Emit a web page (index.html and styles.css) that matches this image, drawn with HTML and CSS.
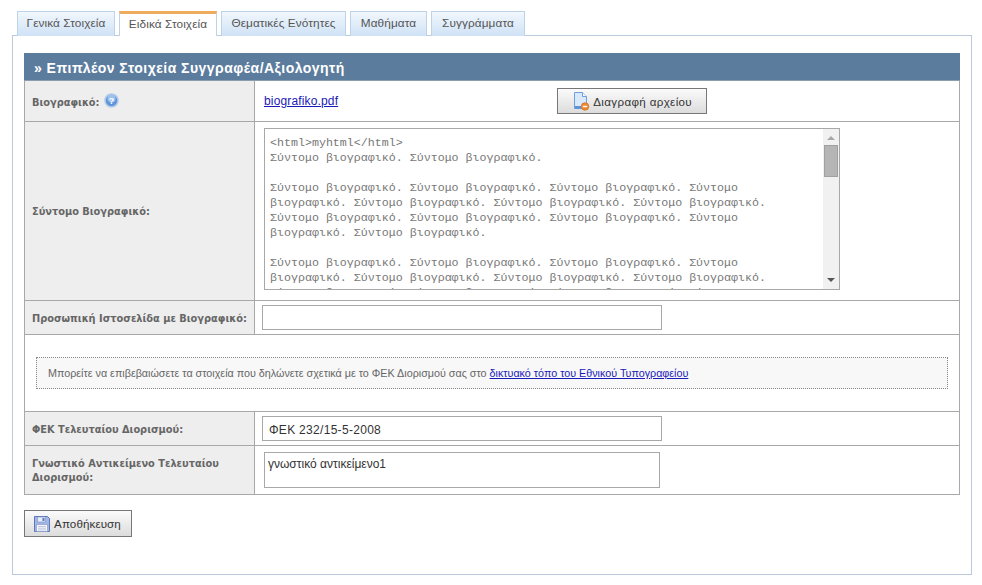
FILE: index.html
```html
<!DOCTYPE html>
<html lang="el">
<head>
<meta charset="utf-8">
<title>Ειδικά Στοιχεία</title>
<link rel="stylesheet" href="styles.css">
</head>
<body>
<div class="page">
  <nav class="tabs">
    <a class="tab t1">Γενικά Στοιχεία</a>
    <a class="tab t2 active">Ειδικά Στοιχεία</a>
    <a class="tab t3">Θεματικές Ενότητες</a>
    <a class="tab t4">Μαθήματα</a>
    <a class="tab t5">Συγγράμματα</a>
  </nav>
  <main class="panel">
    <section class="form">
      <h2 class="form-title">» Επιπλέον Στοιχεία Συγγραφέα/Αξιολογητή</h2>
      <div class="row row-file">
        <div class="label label-top">Βιογραφικό:
          <svg class="help" width="15" height="15" viewBox="0 0 15 15"><circle cx="7.5" cy="7.5" r="6.5" fill="#5f94d8" stroke="#b5cbe8" stroke-width="1.6"/><circle cx="7.5" cy="5.5" r="4" fill="#9cc2f0"/><text x="7.5" y="11" text-anchor="middle" class="help-q">?</text></svg>
        </div>
        <div class="value value-file">
          <a class="link" href="#">biografiko.pdf</a>
          <button class="btn btn-delete" type="button">
            <svg width="18" height="20" viewBox="0 0 18 20"><path d="M2.5 1.5h8l4 4v12h-12z" fill="#d9e8fb" stroke="#6f9fd8"/><path d="M10.5 1.5v4h4" fill="#fff" stroke="#6f9fd8"/><path d="M3 15h6v2.5H3z" fill="#5b93d6"/><circle cx="13" cy="15.5" r="3.8" fill="#ef8a2d" stroke="#c9661a" stroke-width=".6"/><path d="M10.8 15.5h4.4" stroke="#fff" stroke-width="1.4"/></svg>
            <span>Διαγραφή αρχείου</span>
          </button>
        </div>
      </div>
      <div class="row row-bio">
        <div class="label">Σύντομο Βιογραφικό:</div>
        <div class="value value-bio">
          <div class="bio-box">
            <pre class="bio-text">&lt;html&gt;myhtml&lt;/html&gt;
Σύντομο βιογραφικό. Σύντομο βιογραφικό.

Σύντομο βιογραφικό. Σύντομο βιογραφικό. Σύντομο βιογραφικό. Σύντομο
βιογραφικό. Σύντομο βιογραφικό. Σύντομο βιογραφικό. Σύντομο βιογραφικό.
Σύντομο βιογραφικό. Σύντομο βιογραφικό. Σύντομο βιογραφικό. Σύντομο
βιογραφικό. Σύντομο βιογραφικό.

Σύντομο βιογραφικό. Σύντομο βιογραφικό. Σύντομο βιογραφικό. Σύντομο
βιογραφικό. Σύντομο βιογραφικό. Σύντομο βιογραφικό. Σύντομο βιογραφικό.
Σύντομο βιογραφικό. Σύντομο βιογραφικό. Σύντομο βιογραφικό. Σύντομο</pre>
            <div class="scrollbar">
              <span class="arrow arrow-up"></span>
              <span class="thumb"></span>
              <span class="arrow arrow-down"></span>
            </div>
          </div>
        </div>
      </div>
      <div class="row row-input">
        <div class="label label-nowrap">Προσωπική Ιστοσελίδα με Βιογραφικό:</div>
        <div class="value value-input"><div class="input"></div></div>
      </div>
      <div class="row row-notice">
        <p class="notice">Μπορείτε να επιβεβαιώσετε τα στοιχεία που δηλώνετε σχετικά με το ΦΕΚ Διορισμού σας στο <a class="link" href="#">δικτυακό τόπο του Εθνικού Τυπογραφείου</a></p>
      </div>
      <div class="row row-input">
        <div class="label">ΦΕΚ Τελευταίου Διορισμού:</div>
        <div class="value value-input"><div class="input">ΦΕΚ 232/15-5-2008</div></div>
      </div>
      <div class="row row-area">
        <div class="label">Γνωστικό Αντικείμενο Τελευταίου Διορισμού:</div>
        <div class="value value-area"><div class="area">γνωστικό αντικείμενο1</div></div>
      </div>
    </section>
    <button class="btn btn-save" type="button">
      <svg width="18" height="18" viewBox="0 0 18 18"><path d="M1.5 1.5h13l2 2v13h-15z" fill="#9fb6e6" stroke="#5f76b8"/><path d="M4.5 2h8v5h-8z" fill="#e6ecf8" stroke="#7e90c4" stroke-width=".6"/><path d="M9.5 3h2v3h-2z" fill="#5f76b8"/><path d="M3.5 9.5h11v7h-11z" fill="#f7f8fd" stroke="#7e90c4" stroke-width=".6"/><path d="M5 11.5h8M5 13.2h8M5 14.9h8" stroke="#a9b5d6" stroke-width=".7"/></svg>
      <span>Αποθήκευση</span>
    </button>
  </main>
</div>
</body>
</html>
```

FILE: styles.css
```css
* { box-sizing: border-box; }
html, body { margin: 0; padding: 0; background: #fff; }
body { font-family: "Liberation Sans", "DejaVu Sans", sans-serif; font-size: 11.5px; color: #333; }
.page { width: 982px; height: 585px; padding: 11px 10px 0 12px; }

.tabs { display: flex; height: 25px; margin-bottom: -1px; padding-left: 5px; gap: 4px; position: relative; z-index: 1; }
.tab { display: flex; align-items: center; justify-content: center; height: 25px; padding-bottom: 2px; color: #555; font-size: 11.8px; border: 1px solid #bcd3ea; border-bottom: 0; background: linear-gradient(#f1f7fd, #cfe2f6); letter-spacing: .1px; }
.t1 { width: 98px; }
.t2 { width: 98px; }
.t3 { width: 125px; }
.t4 { width: 77px; }
.t5 { width: 94px; }
.tab.active { height: 25px; background: #fff; border-top: 3px solid #f0ac5e; border-left-color: #bcd3ea; border-right-color: #bcd3ea; padding-bottom: 3px; }

.panel { width: 960px; height: 540px; border: 1px solid #bccbdc; padding: 17px 11px 0 11px; background: #fff; }

.form { border: 1px solid #a8a8a8; border-top: 0; width: 936px; }
.form-title { margin: 0 -1px; height: 28px; padding: 0 0 0 10px; background: #5c7c9e; color: #fff; font: bold 14px/30px "Liberation Sans", sans-serif; letter-spacing: .47px; border-bottom: 1px solid #8d9cae; }

.row { display: flex; border-bottom: 1px solid #a8a8a8; }
.row:last-child { border-bottom: 0; }
.row-file { height: 41px; }
.row-bio { height: 179px; }
.row-input { height: 34px; }
.row-notice { height: 77px; padding: 22px 11px 0 11px; }
.row-area { height: 48px; }

.label { flex: none; width: 230px; display: flex; align-items: center; padding: 2px 7px 0; background: #eee; border-right: 1px solid #a8a8a8; color: #666; font: bold 9.8px/14px "DejaVu Sans", sans-serif; }
.label-top { align-items: flex-start; padding-top: 15px; gap: 4px; }
.label-nowrap { white-space: nowrap; }
.help { margin-top: -3px; }
.help-q { font: bold 9px "Liberation Sans", sans-serif; fill: #fff; }

.value { flex: 1; min-width: 0; }
.value-file { display: flex; align-items: flex-start; padding: 7px 0 0 9px; }
.link { color: #1a1ab8; text-decoration: underline; font-size: 12px; }
.value-file .link { line-height: 27px; letter-spacing: .15px; }
.value-bio { padding: 6px 0 0 9px; }
.value-input { padding: 4px 0 0 7px; }
.value-area { padding: 6px 0 0 9px; }

.bio-box { display: flex; width: 576px; height: 162px; border: 1px solid #a8a8a8; overflow: hidden; background: #fff; }
.bio-text { flex: 1; margin: 0; padding: 6px 0 0 5px; overflow: hidden; font: 11.65px/15px "Liberation Mono", monospace; color: #777; }
.scrollbar { flex: none; width: 16px; display: flex; flex-direction: column; background: #f1f1f1; padding: 1px 0; align-items: center; }
.thumb { width: 14px; height: 32px; margin-top: 5px; background: #b5b5b5; border: 1px solid #a0a0a0; }
.arrow { width: 0; height: 0; border-left: 4px solid transparent; border-right: 4px solid transparent; }
.arrow-up { margin-top: 6px; border-bottom: 4px solid #a8a8a8; }
.arrow-down { margin-top: auto; margin-bottom: 6px; border-top: 4px solid #555; }

.input { width: 400px; height: 25px; border: 1px solid #a8a8a8; padding: 0 6px; font: 12px/26px "Liberation Sans", sans-serif; color: #333; background: #fff; letter-spacing: .3px; }
.area { width: 396px; height: 36px; border: 1px solid #a8a8a8; padding: 3px 3px; font: 12px/16px "Liberation Sans", sans-serif; color: #333; }

.notice { flex: 1; margin: 0; height: 32px; padding: 0 11px; background: #f8f8f8; border: 1px dotted #888; color: #666; font-size: 10.75px; line-height: 31px; }
.notice .link { font-size: 10.75px; }

.btn { display: flex; align-items: center; justify-content: center; gap: 3px; padding: 0; border: 1px solid #777; background: linear-gradient(#fbfbfb, #dcdcdc); color: #333; font: 11.6px "Liberation Sans", sans-serif; letter-spacing: .35px; }
.btn-delete { width: 150px; height: 26px; margin-left: 219px; }
.btn-save { width: 108px; height: 27px; margin-top: 15px; padding-right: 2px; letter-spacing: .1px; }
```
